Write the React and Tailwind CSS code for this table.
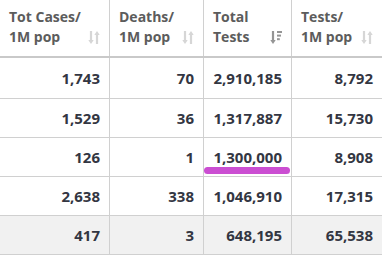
const font = { fontFamily: '"Open Sans", "Liberation Sans", sans-serif' };

function SortIcon({ active }) {
  if (active) {
    return (
      <svg width="12" height="15" viewBox="0 0 12 15" className="text-[#959595]">
        <path d="M3 1v11" stroke="currentColor" strokeWidth="2.2" />
        <path d="M0.3 10l2.7 4 2.7-4z" fill="currentColor" />
        <rect x="7" y="1" width="5" height="2" fill="currentColor" />
        <rect x="7" y="4.6" width="4" height="2" fill="currentColor" />
        <rect x="7" y="8.2" width="2.8" height="2" fill="currentColor" />
      </svg>
    );
  }
  return (
    <svg width="12" height="15" viewBox="0 0 12 15" className="text-[#d6d6d6]">
      <path d="M3 1v11" stroke="currentColor" strokeWidth="2.2" />
      <path d="M0.3 10l2.7 4 2.7-4z" fill="currentColor" />
      <path d="M9 3v11" stroke="currentColor" strokeWidth="2.2" />
      <path d="M6.3 5L9 1l2.7 4z" fill="currentColor" />
    </svg>
  );
}

const headers = [
  { l1: 'Tot Cases/', l2: '1M pop', w: 'w-[110px]' },
  { l1: 'Deaths/', l2: '1M pop', w: 'w-[94px]' },
  { l1: 'Total', l2: 'Tests', w: 'w-[88px]', active: true },
  { l1: 'Tests/', l2: '1M pop', w: 'flex-1' },
];

const rows = [
  ['1,743', '70', '2,910,185', '8,792'],
  ['1,529', '36', '1,317,887', '15,730'],
  ['126', '1', '1,300,000', '8,908'],
  ['2,638', '338', '1,046,910', '17,315'],
  ['417', '3', '648,195', '65,538'],
];

const widths = ['w-[110px]', 'w-[94px]', 'w-[88px]', 'flex-1'];

export default function App() {
  return (
    <div className="w-[382px] h-[255px] bg-white overflow-hidden" style={font}>
      <div className="flex h-[58px] border-b-2 border-[#c9c9c9]">
        {headers.map((h, i) => (
          <div
            key={i}
            className={`${h.w} ${i < 3 ? 'border-r border-[#d0d0d0]' : ''} flex items-end justify-between pl-[9px] pr-[9px] pb-[9px] text-[14px] font-bold leading-[20px] text-[#5c5c5c]`}
          >
            <div>
              <div>{h.l1}</div>
              <div>{h.l2}</div>
            </div>
            <div className="mb-[2px]">
              <SortIcon active={h.active} />
            </div>
          </div>
        ))}
      </div>
      {rows.map((r, ri) => (
        <div
          key={ri}
          className={`flex ${ri === 0 ? 'h-[41px]' : 'h-[39px]'} border-b border-[#d0d0d0] ${ri === 4 ? 'bg-[#f1f1f1]' : 'bg-white'}`}
        >
          {r.map((c, ci) => (
            <div
              key={ci}
              className={`${widths[ci]} ${ci < 3 ? 'border-r border-[#d0d0d0]' : ''} relative flex items-center justify-end pr-[9px] text-[15px] font-bold text-[#333642]`}
            >
              {c}
              {ri === 2 && ci === 2 && (
                <div className="absolute left-0 right-[1px] bottom-[2px] h-[7px] rounded-full bg-[#cb4ed2]" />
              )}
            </div>
          ))}
        </div>
      ))}
    </div>
  );
}
